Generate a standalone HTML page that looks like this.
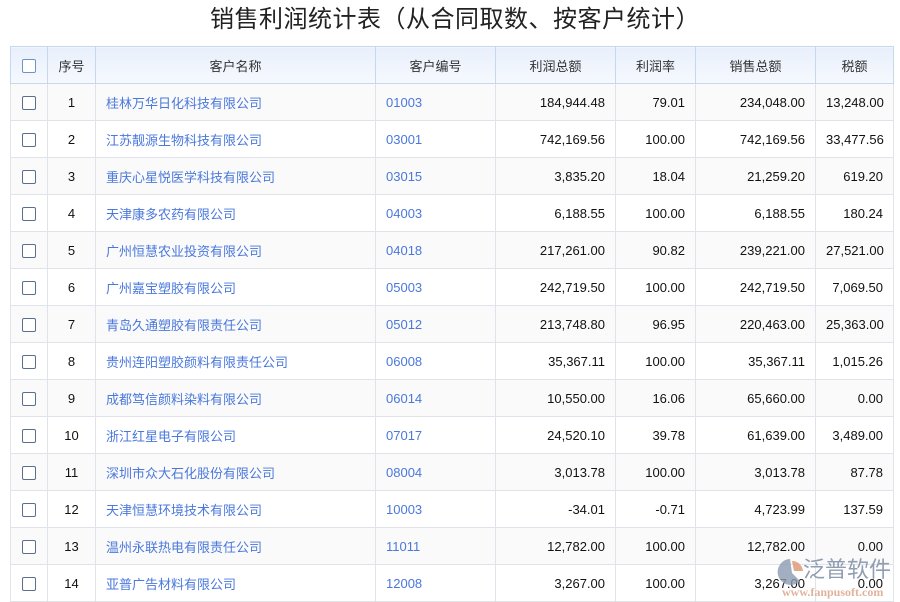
<!DOCTYPE html>
<html><head><meta charset="utf-8"><style>
*{margin:0;padding:0;box-sizing:border-box}
body{width:900px;height:600px;overflow:hidden;background:#fff;font-family:"Liberation Sans","Noto Sans CJK SC",sans-serif;position:relative}
h1{position:absolute;left:0;width:900px;top:4px;text-align:center;font-size:24px;font-weight:normal;color:#222;line-height:32px;letter-spacing:0.5px;padding-left:10px}
table{position:absolute;left:10px;top:46px;border-collapse:collapse;table-layout:fixed;width:883px;font-size:13px}
td,th{border:1px solid #e0e4ea;height:37px;padding:0 10px;white-space:nowrap;overflow:hidden}
th{font-weight:normal;color:#333;background:linear-gradient(#e8f0fc,#f6f9fe);border-color:#c6d8ec}
tr:nth-child(even) td{background:#fafafa}
td.c,th.c{text-align:center}
td.r{text-align:right}
td.l{color:#4a78dc}
.cb{display:inline-block;width:14px;height:14px;border:1px solid #5a6e90;border-radius:2px;vertical-align:middle;background:#fff}
th .cb{border-color:#6f93c8}
td{color:#111}
.wm{position:absolute;left:770px;top:553px;width:130px;height:47px}
</style></head><body>
<h1>销售利润统计表（从合同取数、按客户统计）</h1>
<table>
<colgroup><col style="width:37px"><col style="width:48px"><col style="width:280px"><col style="width:120px"><col style="width:120px"><col style="width:80px"><col style="width:120px"><col style="width:78px"></colgroup>
<tr><th class="c" style="padding:0"><span class="cb"></span></th><th class="c">序号</th><th class="c">客户名称</th><th class="c">客户编号</th><th class="c">利润总额</th><th class="c">利润率</th><th class="c">销售总额</th><th class="c">税额</th></tr>
<tr><td class="c" style="padding:0"><span class="cb"></span></td><td class="c">1</td><td class="l">桂林万华日化科技有限公司</td><td class="l">01003</td><td class="r">184,944.48</td><td class="r">79.01</td><td class="r">234,048.00</td><td class="r">13,248.00</td></tr>
<tr><td class="c" style="padding:0"><span class="cb"></span></td><td class="c">2</td><td class="l">江苏靓源生物科技有限公司</td><td class="l">03001</td><td class="r">742,169.56</td><td class="r">100.00</td><td class="r">742,169.56</td><td class="r">33,477.56</td></tr>
<tr><td class="c" style="padding:0"><span class="cb"></span></td><td class="c">3</td><td class="l">重庆心星悦医学科技有限公司</td><td class="l">03015</td><td class="r">3,835.20</td><td class="r">18.04</td><td class="r">21,259.20</td><td class="r">619.20</td></tr>
<tr><td class="c" style="padding:0"><span class="cb"></span></td><td class="c">4</td><td class="l">天津康多农药有限公司</td><td class="l">04003</td><td class="r">6,188.55</td><td class="r">100.00</td><td class="r">6,188.55</td><td class="r">180.24</td></tr>
<tr><td class="c" style="padding:0"><span class="cb"></span></td><td class="c">5</td><td class="l">广州恒慧农业投资有限公司</td><td class="l">04018</td><td class="r">217,261.00</td><td class="r">90.82</td><td class="r">239,221.00</td><td class="r">27,521.00</td></tr>
<tr><td class="c" style="padding:0"><span class="cb"></span></td><td class="c">6</td><td class="l">广州嘉宝塑胶有限公司</td><td class="l">05003</td><td class="r">242,719.50</td><td class="r">100.00</td><td class="r">242,719.50</td><td class="r">7,069.50</td></tr>
<tr><td class="c" style="padding:0"><span class="cb"></span></td><td class="c">7</td><td class="l">青岛久通塑胶有限责任公司</td><td class="l">05012</td><td class="r">213,748.80</td><td class="r">96.95</td><td class="r">220,463.00</td><td class="r">25,363.00</td></tr>
<tr><td class="c" style="padding:0"><span class="cb"></span></td><td class="c">8</td><td class="l">贵州连阳塑胶颜料有限责任公司</td><td class="l">06008</td><td class="r">35,367.11</td><td class="r">100.00</td><td class="r">35,367.11</td><td class="r">1,015.26</td></tr>
<tr><td class="c" style="padding:0"><span class="cb"></span></td><td class="c">9</td><td class="l">成都笃信颜料染料有限公司</td><td class="l">06014</td><td class="r">10,550.00</td><td class="r">16.06</td><td class="r">65,660.00</td><td class="r">0.00</td></tr>
<tr><td class="c" style="padding:0"><span class="cb"></span></td><td class="c">10</td><td class="l">浙江红星电子有限公司</td><td class="l">07017</td><td class="r">24,520.10</td><td class="r">39.78</td><td class="r">61,639.00</td><td class="r">3,489.00</td></tr>
<tr><td class="c" style="padding:0"><span class="cb"></span></td><td class="c">11</td><td class="l">深圳市众大石化股份有限公司</td><td class="l">08004</td><td class="r">3,013.78</td><td class="r">100.00</td><td class="r">3,013.78</td><td class="r">87.78</td></tr>
<tr><td class="c" style="padding:0"><span class="cb"></span></td><td class="c">12</td><td class="l">天津恒慧环境技术有限公司</td><td class="l">10003</td><td class="r">-34.01</td><td class="r">-0.71</td><td class="r">4,723.99</td><td class="r">137.59</td></tr>
<tr><td class="c" style="padding:0"><span class="cb"></span></td><td class="c">13</td><td class="l">温州永联热电有限责任公司</td><td class="l">11011</td><td class="r">12,782.00</td><td class="r">100.00</td><td class="r">12,782.00</td><td class="r">0.00</td></tr>
<tr><td class="c" style="padding:0"><span class="cb"></span></td><td class="c">14</td><td class="l">亚普广告材料有限公司</td><td class="l">12008</td><td class="r">3,267.00</td><td class="r">100.00</td><td class="r">3,267.00</td><td class="r">0.00</td></tr>
</table>
<svg class="wm" viewBox="0 0 130 47">
<path d="M20 6 A13 13 0 1 0 30 28 L22 20 Z" fill="#8a9bb0" opacity="0.8"/>
<path d="M22 8 A11 11 0 0 1 33 18 L24 18 Z" fill="#e09a78" opacity="0.85"/>
<text x="33" y="24" font-size="22" fill="#7d8ea5" opacity="0.85" font-family="Noto Sans CJK SC,sans-serif">泛普软件</text>
<text x="12" y="43" font-size="12" fill="#d9a084" opacity="0.8" font-weight="bold" font-family="Liberation Serif,serif">www.fanpusoft.com</text>
</svg>
</body></html>
